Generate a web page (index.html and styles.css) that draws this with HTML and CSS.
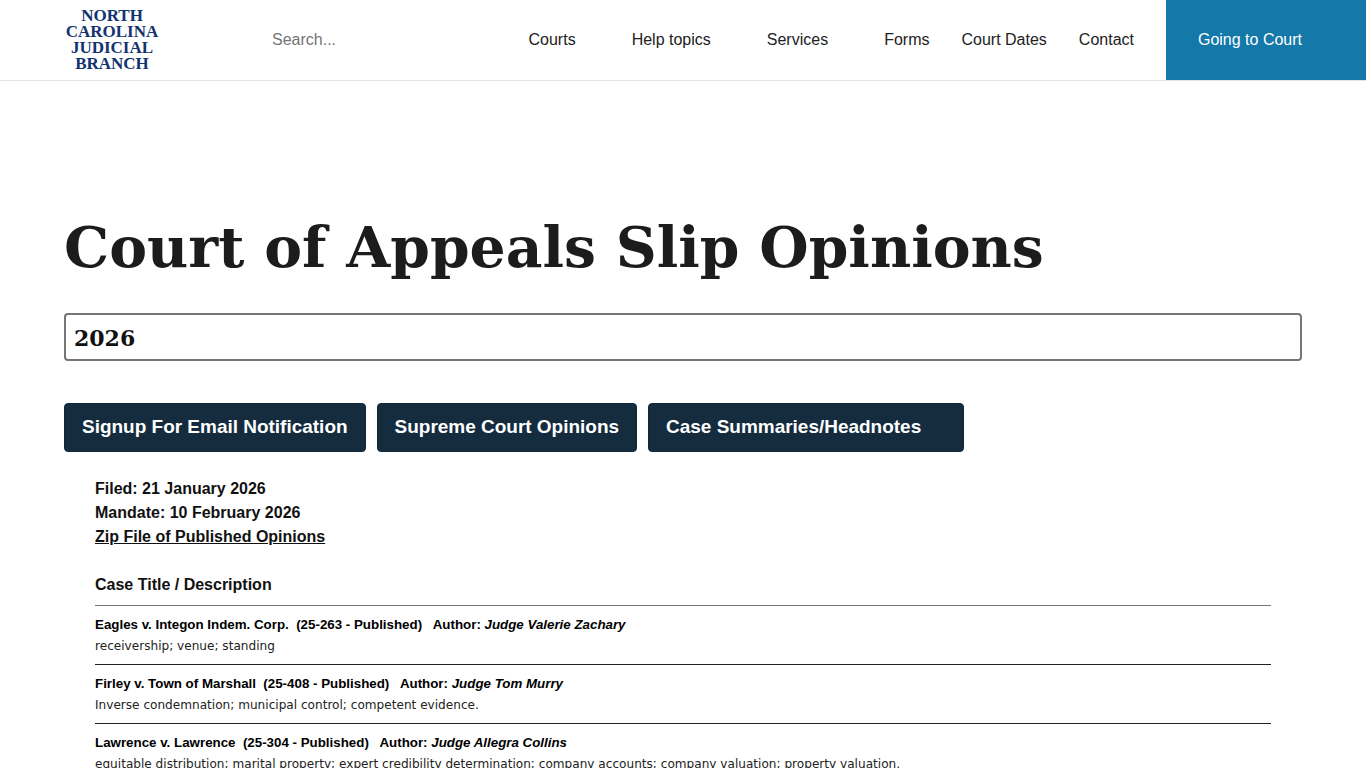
FILE: index.html
```html
<!DOCTYPE html>
<html lang="en">
<head>
    <meta charset="UTF-8">
    <meta name="viewport" content="width=device-width, initial-scale=1.0">
    <title>Court of Appeals Slip Opinions</title>
    <link rel="stylesheet" href="styles.css">
</head>
<body>
    <header class="site-header">
        <a class="logo" href="#">NORTH<br>CAROLINA<br>JUDICIAL<br>BRANCH</a>
        <div class="search">Search...</div>
        <nav class="nav">
            <a class="nav-item has-menu" href="#">Courts</a>
            <a class="nav-item has-menu" href="#">Help topics</a>
            <a class="nav-item has-menu" href="#">Services</a>
            <a class="nav-item" href="#">Forms</a>
            <a class="nav-item" href="#">Court Dates</a>
            <a class="nav-item" href="#">Contact</a>
        </nav>
        <a class="cta" href="#">Going to Court</a>
    </header>

    <main class="main">
        <h1>Court of Appeals Slip Opinions</h1>
        <div class="year-select">2026</div>

        <div class="buttons">
            <a class="btn" href="#">Signup For Email Notification</a>
            <a class="btn" href="#">Supreme Court Opinions</a>
            <a class="btn btn-wide" href="#">Case Summaries/Headnotes</a>
        </div>

        <section class="opinions">
            <div class="filing">
                <div>Filed: 21 January 2026</div>
                <div>Mandate: 10 February 2026</div>
                <a href="#">Zip File of Published Opinions</a>
            </div>

            <div class="list-title">Case Title / Description</div>

            <div class="case">
                <div class="case-title">Eagles v. Integon Indem. Corp.&nbsp; (25-263 - Published) &nbsp; Author: <em>Judge Valerie Zachary</em></div>
                <div class="case-desc">receivership; venue; standing</div>
            </div>
            <div class="case">
                <div class="case-title">Firley v. Town of Marshall&nbsp; (25-408 - Published) &nbsp; Author: <em>Judge Tom Murry</em></div>
                <div class="case-desc">Inverse condemnation; municipal control; competent evidence.</div>
            </div>
            <div class="case">
                <div class="case-title">Lawrence v. Lawrence&nbsp; (25-304 - Published) &nbsp; Author: <em>Judge Allegra Collins</em></div>
                <div class="case-desc">equitable distribution; marital property; expert credibility determination; company accounts; company valuation; property valuation.</div>
            </div>
        </section>
    </main>
</body>
</html>
```

FILE: styles.css
```css
html, body {
    height: 768px;
    overflow: hidden;
}
body {
    font-family: "Liberation Sans", Arial, sans-serif;
    background-color: #fff;
    color: #000;
    margin: 0;
    padding: 0;
}
a {
    color: inherit;
    text-decoration: none;
}
.site-header {
    display: flex;
    align-items: stretch;
    height: 80px;
    border-bottom: 1px solid #e2e2e2;
}
.logo {
    width: 224px;
    flex: none;
    align-self: center;
    text-align: center;
    font-family: "Liberation Serif", serif;
    font-weight: bold;
    font-size: 17px;
    line-height: 16px;
    color: #12336f;
}
.search {
    flex: 1;
    align-self: center;
    padding-left: 48px;
    font-size: 16px;
    color: #757575;
}
.nav {
    display: flex;
    align-items: center;
    margin-right: 16px;
}
.nav-item {
    padding: 0 16px;
    font-size: 16px;
    color: #222;
}
.nav-item.has-menu {
    padding-right: 40px;
}
.cta {
    box-sizing: border-box;
    width: 200px;
    flex: none;
    display: flex;
    align-items: center;
    justify-content: center;
    padding-right: 32px;
    background: #1478a9;
    color: #fff;
    font-size: 16px;
}
.main {
    padding: 0 64px;
}
h1 {
    margin: 0;
    padding-top: 126px;
    font-family: "DejaVu Serif", serif;
    font-size: 56.75px;
    line-height: 81px;
    font-weight: bold;
    white-space: nowrap;
    color: #1c1c1c;
}
.year-select {
    box-sizing: border-box;
    height: 48px;
    margin-top: 25px;
    padding-left: 8px;
    border: 2px solid #767676;
    border-radius: 4px;
    font-family: "DejaVu Serif", serif;
    font-size: 22px;
    font-weight: bold;
    line-height: 46px;
    color: #111;
}
.buttons {
    display: flex;
    gap: 11px;
    margin-top: 42px;
}
.btn {
    box-sizing: border-box;
    height: 49px;
    padding: 0 17px;
    background: #152c3f;
    border: 1px solid #10283a;
    border-radius: 4px;
    color: #fff;
    font-size: 18.98px;
    font-weight: bold;
    line-height: 45px;
}
.btn-wide {
    padding-right: 42px;
}
.opinions {
    margin: 25px 31px 0;
}
.filing {
    font-size: 16px;
    font-weight: bold;
    line-height: 24px;
    color: #111;
}
.filing a {
    display: block;
    text-decoration: underline;
}
.list-title {
    margin-top: 24px;
    padding-bottom: 8px;
    font-size: 16px;
    font-weight: bold;
    line-height: 24px;
    color: #111;
}
.case {
    height: 58px;
    border-top: 1px solid #222;
}
.list-title + .case {
    border-top-color: #777;
}
.case-title {
    padding-top: 10px;
    font-size: 13.33px;
    font-weight: bold;
    line-height: 18px;
    white-space: pre-wrap;
}
.case-desc {
    margin-top: 4px;
    font-family: "DejaVu Sans", Verdana, sans-serif;
    font-size: 12.1px;
    line-height: 16px;
    color: #222;
}
```
